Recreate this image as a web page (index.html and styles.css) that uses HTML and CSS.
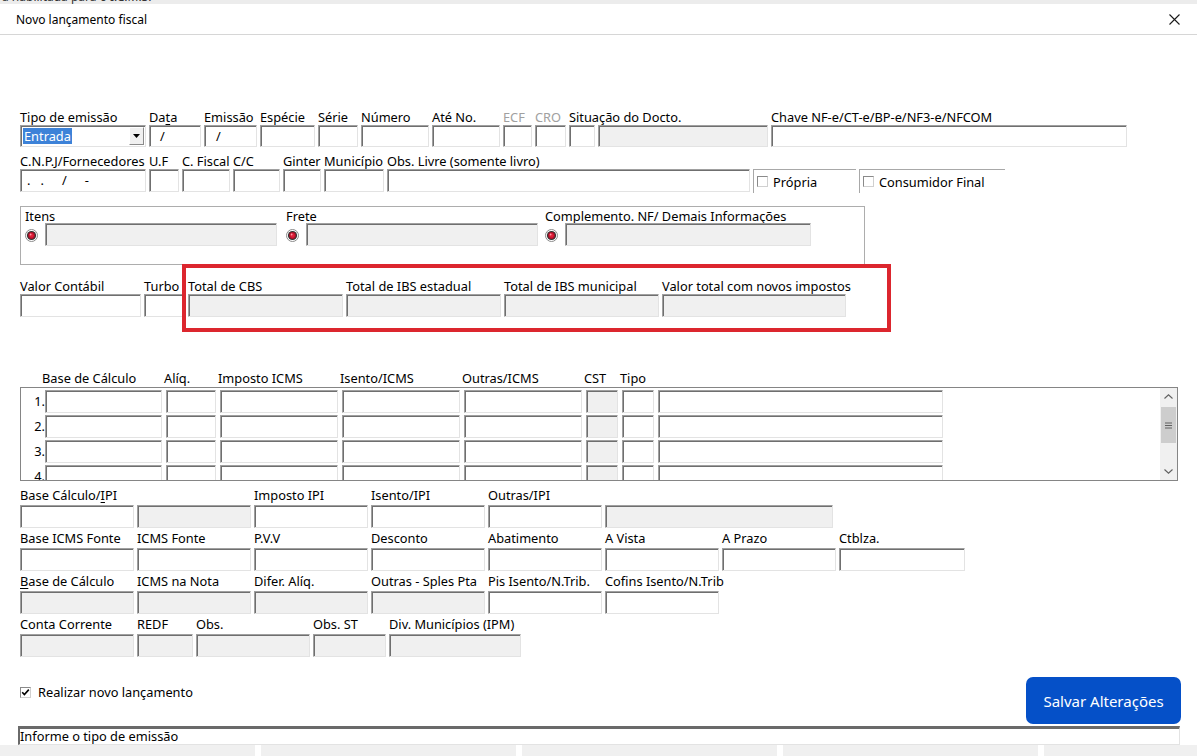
FILE: index.html
```html
<!DOCTYPE html>
<html lang="pt-BR">
<head>
<meta charset="UTF-8">
<meta name="viewport" content="width=device-width, initial-scale=1.0">
<title>Novo lançamento fiscal</title>
<link rel="stylesheet" href="styles.css">
</head>
<body>
<div class="topstrip"><span>a habilitada para o I.C.M.S.</span></div>
<div class="titlebar">
  <span class="title">Novo lançamento fiscal</span>
  <svg class="close" width="11" height="11" viewBox="0 0 11 11"><path d="M0.5 0.5L10.5 10.5M10.5 0.5L0.5 10.5" stroke="#1a1a1a" stroke-width="1.1"/></svg>
</div>

<div class="form">
  <!-- linha 1 -->
  <div class="row r1">
    <div class="fld w126"><label>Tipo de emissão</label>
      <div class="combo"><span class="sel">Entrada</span>
        <span class="drop"><svg width="7" height="4" viewBox="0 0 7 4"><path d="M0 0H7L3.5 4Z" fill="#000"/></svg></span>
      </div>
    </div>
    <div class="fld w52"><label>Da<u>t</u>a</label><div class="inp pl10">/</div></div>
    <div class="fld w53"><label>Emissão</label><div class="inp pl11">/</div></div>
    <div class="fld w55"><label>Espécie</label><div class="inp"></div></div>
    <div class="fld w40"><label>Série</label><div class="inp"></div></div>
    <div class="fld w68"><label>Número</label><div class="inp"></div></div>
    <div class="fld w68"><label>Até No.</label><div class="inp"></div></div>
    <div class="fld w29"><label class="dim">ECF</label><div class="inp"></div></div>
    <div class="fld w31"><label class="dim">CRO</label><div class="inp"></div></div>
    <div class="fld w199"><label>Situação do Docto.</label>
      <div class="pair"><div class="inp w26"></div><div class="inp ro w170"></div></div>
    </div>
    <div class="fld w356"><label>Chave NF-e/CT-e/BP-e/NF3-e/NFCOM</label><div class="inp"></div></div>
  </div>

  <!-- linha 2 -->
  <div class="row r2">
    <div class="fld w126"><label>C.N.P.J/Fornecedores</label><div class="inp cnpj"><span>.</span><span>.</span><span>/</span><span>-</span></div></div>
    <div class="fld w30"><label>U.F</label><div class="inp"></div></div>
    <div class="fld w48"><label>C. Fiscal</label><div class="inp"></div></div>
    <div class="fld w47"><label>C/C</label><div class="inp"></div></div>
    <div class="fld w38"><label>Ginter</label><div class="inp"></div></div>
    <div class="fld w60"><label>Município</label><div class="inp"></div></div>
    <div class="fld w363"><label>Obs. Livre (somente livro)</label><div class="inp"></div></div>
    <div class="opt w103"><span class="cb"></span>Própria</div>
    <div class="opt w146"><span class="cb"></span>Consumidor Final</div>
  </div>

  <!-- itens / frete / complemento -->
  <div class="panel">
    <div class="grp g1"><label>Itens</label>
      <div class="line"><svg class="radio" width="13" height="13" viewBox="0 0 13 13"><circle cx="6.5" cy="6.5" r="6" fill="#fff" stroke="#8a8a8a"/><circle cx="6.5" cy="6.5" r="4.6" fill="#333"/><circle cx="6.5" cy="6.5" r="3.4" fill="#b0102a"/><circle cx="6.5" cy="6.5" r="2.2" fill="#e0203a"/><circle cx="5.6" cy="5.5" r="0.9" fill="#ff9aa5"/></svg><div class="inp ro w232"></div></div>
    </div>
    <div class="grp g2"><label>Frete</label>
      <div class="line"><svg class="radio" width="13" height="13" viewBox="0 0 13 13"><circle cx="6.5" cy="6.5" r="6" fill="#fff" stroke="#8a8a8a"/><circle cx="6.5" cy="6.5" r="4.6" fill="#333"/><circle cx="6.5" cy="6.5" r="3.4" fill="#b0102a"/><circle cx="6.5" cy="6.5" r="2.2" fill="#e0203a"/><circle cx="5.6" cy="5.5" r="0.9" fill="#ff9aa5"/></svg><div class="inp ro w232"></div></div>
    </div>
    <div class="grp g3"><label>Complemento. NF/ Demais Informações</label>
      <div class="line"><svg class="radio" width="13" height="13" viewBox="0 0 13 13"><circle cx="6.5" cy="6.5" r="6" fill="#fff" stroke="#8a8a8a"/><circle cx="6.5" cy="6.5" r="4.6" fill="#333"/><circle cx="6.5" cy="6.5" r="3.4" fill="#b0102a"/><circle cx="6.5" cy="6.5" r="2.2" fill="#e0203a"/><circle cx="5.6" cy="5.5" r="0.9" fill="#ff9aa5"/></svg><div class="inp ro w246"></div></div>
    </div>
  </div>

  <!-- valores -->
  <div class="row r3">
    <div class="fld w121"><label>Valor Contábil</label><div class="inp"></div></div>
    <div class="fld w41"><label>Turbo</label><div class="inp"></div></div>
    <div class="cbs">
      <div class="fld w155"><label>Total de CBS</label><div class="inp ro"></div></div>
      <div class="fld w155"><label>Total de IBS estadual</label><div class="inp ro"></div></div>
      <div class="fld w155"><label>Total de IBS municipal</label><div class="inp ro"></div></div>
      <div class="fld w184"><label>Valor total com novos impostos</label><div class="inp ro"></div></div>
    </div>
  </div>

  <!-- grade icms -->
  <div class="thead">
    <span class="th w122">Base de Cálculo</span>
    <span class="th w54">Alíq.</span>
    <span class="th w122">Imposto ICMS</span>
    <span class="th w122">Isento/ICMS</span>
    <span class="th w122">Outras/ICMS</span>
    <span class="th w36">CST</span>
    <span class="th">Tipo</span>
  </div>
  <div class="grid">
    <div class="rows">
      <div class="trow"><span class="num">1.</span><div class="cells"><div class="inp w117"></div><div class="inp w50"></div><div class="inp w118"></div><div class="inp w118"></div><div class="inp w118"></div><div class="inp ro w32"></div><div class="inp w32"></div><div class="inp w285"></div></div></div>
      <div class="trow"><span class="num">2.</span><div class="cells"><div class="inp w117"></div><div class="inp w50"></div><div class="inp w118"></div><div class="inp w118"></div><div class="inp w118"></div><div class="inp ro w32"></div><div class="inp w32"></div><div class="inp w285"></div></div></div>
      <div class="trow"><span class="num">3.</span><div class="cells"><div class="inp w117"></div><div class="inp w50"></div><div class="inp w118"></div><div class="inp w118"></div><div class="inp w118"></div><div class="inp ro w32"></div><div class="inp w32"></div><div class="inp w285"></div></div></div>
      <div class="trow"><span class="num">4.</span><div class="cells"><div class="inp w117"></div><div class="inp w50"></div><div class="inp w118"></div><div class="inp w118"></div><div class="inp w118"></div><div class="inp ro w32"></div><div class="inp w32"></div><div class="inp w285"></div></div></div>
    </div>
    <div class="vscroll">
      <span class="arrow"><svg width="9" height="5" viewBox="0 0 9 5"><path d="M0.5 4.5L4.5 0.8L8.5 4.5" fill="none" stroke="#606060" stroke-width="1.1"/></svg></span>
      <span class="thumb"><svg width="7" height="7" viewBox="0 0 7 7"><path d="M0 1H7M0 3.5H7M0 6H7" stroke="#606060" stroke-width="1"/></svg></span>
      <span class="arrow down"><svg width="9" height="5" viewBox="0 0 9 5"><path d="M0.5 0.5L4.5 4.2L8.5 0.5" fill="none" stroke="#606060" stroke-width="1.1"/></svg></span>
    </div>
  </div>

  <!-- ipi / fonte / notas -->
  <div class="row low">
    <div class="fld w114"><label>Base Cálculo/<u>I</u>PI</label><div class="inp"></div></div>
    <div class="fld w114"><label></label><div class="inp ro"></div></div>
    <div class="fld w114"><label>Imposto IPI</label><div class="inp"></div></div>
    <div class="fld w114"><label>Isento/IPI</label><div class="inp"></div></div>
    <div class="fld w114"><label>Outras/IPI</label><div class="inp"></div></div>
    <div class="fld w228"><label></label><div class="inp ro"></div></div>
  </div>
  <div class="row low">
    <div class="fld w114"><label>Base ICMS Fonte</label><div class="inp"></div></div>
    <div class="fld w114"><label>ICMS Fonte</label><div class="inp"></div></div>
    <div class="fld w114"><label>P.V.V</label><div class="inp"></div></div>
    <div class="fld w114"><label>Desconto</label><div class="inp"></div></div>
    <div class="fld w114"><label>Abatimento</label><div class="inp"></div></div>
    <div class="fld w114"><label>A Vista</label><div class="inp"></div></div>
    <div class="fld w114"><label>A Prazo</label><div class="inp"></div></div>
    <div class="fld w126"><label>Ctblza.</label><div class="inp"></div></div>
  </div>
  <div class="row low">
    <div class="fld w114"><label><u>B</u>ase de Cálculo</label><div class="inp ro"></div></div>
    <div class="fld w114"><label>ICMS na Nota</label><div class="inp ro"></div></div>
    <div class="fld w114"><label>Difer. Alíq.</label><div class="inp ro"></div></div>
    <div class="fld w114"><label>Outras - Sples Pta</label><div class="inp ro"></div></div>
    <div class="fld w114"><label>Pis Isento/N.Trib.</label><div class="inp"></div></div>
    <div class="fld w114"><label>Cofins Isento/N.Trib</label><div class="inp"></div></div>
  </div>
  <div class="row low">
    <div class="fld w114"><label>Conta Corrente</label><div class="inp ro"></div></div>
    <div class="fld w56"><label>REDF</label><div class="inp ro"></div></div>
    <div class="fld w114"><label>Obs.</label><div class="inp ro"></div></div>
    <div class="fld w73"><label>Obs. ST</label><div class="inp ro"></div></div>
    <div class="fld w132"><label>Div. Municípios (IPM)</label><div class="inp ro"></div></div>
  </div>

  <div class="actions">
    <div class="chk-line"><span class="cb on"><svg width="9" height="9" viewBox="0 0 9 9"><path d="M1.2 4.2L3.4 6.6L7.8 1.6" fill="none" stroke="#000" stroke-width="1.6"/></svg></span>Realizar novo lançamento</div>
    <button class="save">Salvar Alterações</button>
  </div>

  <div class="status">Informe o tipo de emissão</div>
</div>

<div class="bottomstrip">
  <span class="seg"></span><span class="seg"></span><span class="seg"></span><span class="seg"></span><span class="seg last"></span>
</div>
</body>
</html>
```

FILE: styles.css
```css
* {
  box-sizing: border-box;
}
body {
  margin: 0;
  width: 1197px;
  height: 756px;
  overflow: hidden;
  background: #fff;
  color: #000;
  font-family: "Noto Sans", "Open Sans", sans-serif;
  font-size: 12.8px;
}
label {
  display: block;
  white-space: nowrap;
}
u {
  text-decoration-thickness: 1px;
  text-underline-offset: 2px;
}

/* janela */
.topstrip {
  height: 4px;
  background: #ececec;
  overflow: hidden;
  padding-left: 2px;
  font-size: 12px;
  line-height: 4px;
  color: #333;
}
.topstrip span {
  position: relative;
  top: -5px;
}
.titlebar {
  height: 31px;
  border-bottom: 1px solid #d6d6d6;
  display: flex;
  align-items: center;
  justify-content: space-between;
  padding: 0 17px 0 16px;
}
.title {
  font-size: 12px;
}

/* form */
.form {
  padding: 0 16px 0 20px;
}
.row {
  display: flex;
  gap: 3px;
  align-items: flex-end;
}
.fld {
  flex: none;
}
.fld label {
  height: 16px;
  line-height: 16px;
}
.dim {
  color: #a0a0a0;
}
.inp {
  flex: none;
  height: 23px;
  background: #fff;
  border: 1px solid;
  border-color: #a0a0a0 #e3e3e3 #e3e3e3 #a0a0a0;
  box-shadow: inset 1px 1px 0 #6f6f6f;
  line-height: 20px;
  white-space: pre;
}
.inp.ro {
  background: #f0f0f0;
}
.pl10 { padding-left: 10px; }
.pl11 { padding-left: 11px; }
.pair {
  display: flex;
  gap: 3px;
}

.r1 {
  margin-top: 74px;
}
.r1 .inp, .r1 .combo {
  height: 22px;
}
.r2 {
  margin-top: 6px;
}
.r3 {
  margin-top: 13px;
}

.combo {
  display: flex;
  align-items: center;
  height: 22px;
  border: 1px solid;
  border-color: #a0a0a0 #e3e3e3 #e3e3e3 #a0a0a0;
  box-shadow: inset 1px 1px 0 #6f6f6f;
  padding: 1px 1px 1px 2px;
}
.sel {
  background: #3d82d8;
  color: #fff;
  line-height: 16px;
  padding: 0 1px;
}
.drop {
  margin-left: auto;
  width: 15px;
  height: 18px;
  background: #f0f0f0;
  border: 1px solid;
  border-color: #fff #8a8a8a #8a8a8a #fff;
  display: flex;
  align-items: center;
  justify-content: center;
}

.cnpj {
  display: flex;
  padding-left: 5px;
}
.cnpj span:nth-child(1) { margin-left: 1px; }
.cnpj span:nth-child(2) { margin-left: 10px; }
.cnpj span:nth-child(3) { margin-left: 18px; }
.cnpj span:nth-child(4) { margin-left: 18px; }

.opt {
  flex: none;
  height: 24px;
  margin-bottom: -1px;
  border-top: 1px solid #a8a8a8;
  border-left: 1px solid #a8a8a8;
  display: flex;
  align-items: center;
  gap: 5px;
  padding-left: 3px;
}
.cb {
  width: 11px;
  height: 11px;
  border: 1px solid;
  border-color: #8a8a8a #d0d0d0 #d0d0d0 #8a8a8a;
  background: #fff;
  display: inline-flex;
  align-items: center;
  justify-content: center;
}

/* painel itens */
.panel {
  margin-top: 14px;
  width: 845px;
  height: 59px;
  border: 1px solid #adadad;
  display: flex;
  padding: 1px 0 0 4px;
}
.grp label {
  height: 15px;
  line-height: 16px;
}
.g1 { width: 252px; margin-right: 9px; }
.g2 { width: 253px; margin-right: 6px; }
.line {
  display: flex;
  align-items: flex-start;
  gap: 7px;
}
.radio {
  margin-top: 6px;
  flex: none;
}

/* destaque cbs / ibs */
.cbs {
  display: flex;
  gap: 3px;
  position: relative;
}
.cbs::after {
  content: "";
  box-sizing: border-box;
  position: absolute;
  left: -6px;
  top: -14px;
  width: 709px;
  height: 68px;
  border: 4px solid #dc262e;
}

/* grade */
.thead {
  margin-top: 53px;
  display: flex;
  height: 17px;
  line-height: 16px;
  padding-left: 22px;
}
.th {
  flex: none;
  white-space: nowrap;
}
.grid {
  width: 1158px;
  height: 94px;
  border: 1px solid #858585;
  display: flex;
  overflow: hidden;
}
.rows {
  flex: 1;
  padding-top: 2px;
}
.trow {
  display: flex;
  height: 23px;
  margin-bottom: 2px;
}
.num {
  width: 24px;
  text-align: right;
  line-height: 23px;
}
.cells {
  display: flex;
  gap: 4px;
}
.vscroll {
  width: 17px;
  background: #f0f0f0;
  display: flex;
  flex-direction: column;
  align-items: center;
}
.arrow {
  height: 17px;
  display: flex;
  align-items: center;
  justify-content: center;
}
.thumb {
  margin-top: 2px;
  width: 15px;
  height: 36px;
  background: #cdcdcd;
  display: flex;
  align-items: center;
  justify-content: center;
}
.arrow.down {
  margin-top: auto;
}

/* campos de baixo */
.low {
  margin-top: 1px;
}
.grid + .low {
  margin-top: 5px;
}
.low .fld label {
  height: 19px;
  line-height: 18px;
}

.w26 { width: 26px; }
.w29 { width: 29px; }
.w30 { width: 30px; }
.w31 { width: 31px; }
.w32 { width: 32px; }
.w36 { width: 36px; }
.w38 { width: 38px; }
.w40 { width: 40px; }
.w41 { width: 41px; }
.w47 { width: 47px; }
.w48 { width: 48px; }
.w50 { width: 50px; }
.w52 { width: 52px; }
.w53 { width: 53px; }
.w54 { width: 54px; }
.w55 { width: 55px; }
.w56 { width: 56px; }
.w60 { width: 60px; }
.w68 { width: 68px; }
.w73 { width: 73px; }
.w103 { width: 103px; }
.w114 { width: 114px; }
.w117 { width: 117px; }
.w118 { width: 118px; }
.w121 { width: 121px; }
.w122 { width: 122px; }
.w126 { width: 126px; }
.w132 { width: 132px; }
.w146 { width: 146px; }
.w155 { width: 155px; }
.w170 { width: 170px; }
.w184 { width: 184px; }
.w199 { width: 199px; }
.w228 { width: 228px; }
.w232 { width: 232px; }
.w246 { width: 246px; }
.w285 { width: 285px; }
.w356 { width: 356px; }
.w363 { width: 363px; }

/* rodape */
.actions {
  margin-top: 20px;
  height: 47px;
  display: flex;
  justify-content: space-between;
}
.chk-line {
  margin-top: 8px;
  height: 14px;
  display: flex;
  align-items: center;
  gap: 7px;
}
.save {
  width: 155px;
  height: 47px;
  border: none;
  border-radius: 7px;
  background: #0550c8;
  color: #fff;
  font-family: "Noto Sans", "Open Sans", sans-serif;
  font-size: 15px;
  padding: 0;
}
.status {
  margin: 2px 1px 0 -2px;
  height: 19px;
  border-style: solid;
  border-width: 3px 1px 1px 2px;
  border-color: #6a6a6a #e3e3e3 #e3e3e3 #6a6a6a;
  line-height: 15px;
  padding-left: 0;
  white-space: nowrap;
  overflow: hidden;
}
.bottomstrip {
  height: 11px;
  display: flex;
  gap: 6px;
}
.seg {
  flex: none;
  width: 255px;
  background: #f0f0f0;
}
.seg.last {
  flex: 1;
}
```
